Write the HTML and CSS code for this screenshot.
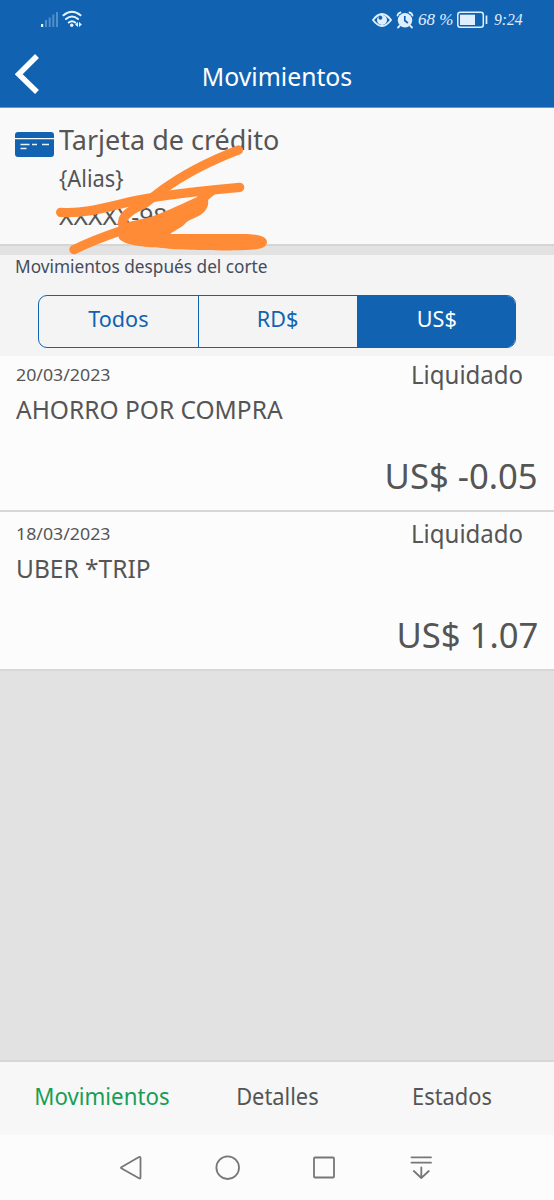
FILE: index.html
```html
<!DOCTYPE html>
<html lang="es">
<head>
<meta charset="utf-8">
<title>Movimientos</title>
<link rel="stylesheet" href="styles.css">
</head>
<body>
<div class="screen">
  <header class="top">
    <div class="status">
      <svg class="signal" width="50" height="24" viewBox="0 0 50 24">
        <g fill="#4f8fca"><rect x="5" y="12" width="2" height="7"/><rect x="8.700" y="9.500" width="2" height="9.500"/><rect x="12.300" y="6.500" width="2" height="12.500"/><rect x="16" y="4" width="2" height="15"/></g>
        <rect x="1" y="16" width="2.200" height="3" fill="#e6fbff"/>
        <g fill="none" stroke="#e3f6ff" stroke-width="2" stroke-linecap="round"><path d="M23.500 7.300q8.500-7 17 0M26 11q6-5 12 0M28.800 14.500q3.200-2.600 6.400 0"/></g>
        <circle cx="31.700" cy="17.300" r="1.700" fill="#e3f6ff"/>
        <path d="M38 14v5l-2.900-2.500zM39 14v5l2.900-2.500z" fill="#e3f6ff"/>
      </svg>
      <div class="status-right">
        <svg class="eye" width="20" height="16" viewBox="0 0 20 16"><path d="M1 8Q10-4 19 8Q10 20 1 8z" fill="none" stroke="#e0efff" stroke-width="1.900"/><circle cx="10" cy="8" r="5" fill="#e0efff"/><circle cx="8.400" cy="5.800" r="2" fill="#1163b1"/></svg>
        <svg class="alarm" width="18" height="18" viewBox="0 0 18 18"><circle cx="9" cy="9.300" r="7.200" fill="#e0efff"/><path d="M1.500 4.500Q2 2 4.500 1.500M13.500 1.500Q16 2 16.500 4.500M3.500 15l-1.500 1.500M14.500 15l1.500 1.500" fill="none" stroke="#e0efff" stroke-width="1.800" stroke-linecap="round"/><path d="M8.800 5v4.500l3 2.500" fill="none" stroke="#1163b1" stroke-width="1.700"/></svg>
        <span class="percent">68 %</span>
        <svg class="battery" width="31" height="18" viewBox="0 0 31 18"><rect x=".8" y="1.300" width="25.500" height="15" rx="2.500" fill="none" stroke="#e0efff" stroke-width="1.500"/><rect x="3" y="3.700" width="15" height="10.300" fill="#e0efff"/><path d="M29.500 4.500v8.500" stroke="#e0efff" stroke-width="1.700"/></svg>
        <span class="clock">9:24</span>
      </div>
    </div>
    <div class="titlebar">
      <svg class="back" width="24" height="40" viewBox="0 0 24 40"><path d="M22 2L3.700 20.300 22 38" fill="none" stroke="#fff" stroke-width="5.500"/></svg>
      <h1 class="title"><span>Movimientos</span></h1>
    </div>
  </header>

  <section class="account">
    <svg class="card-icon" width="39" height="25" viewBox="0 0 39 25"><path d="M0 6V3Q0 0 3 0H36Q39 0 39 3V6zM0 7.300H39V22Q39 25 36 25H3Q0 25 0 22z" fill="#1163b1"/><path d="M5.500 12.500h9M5.500 16.500h6M17 12.500h5M27 12.500h7" stroke="#e8f2fb" stroke-width="1.300"/></svg>
    <div class="account-text">
      <div class="product"><span>Tarjeta de crédito</span></div>
      <div class="alias"><span>{Alias}</span></div>
      <div class="number"><span>XXXXX-98</span></div>
    </div>
    <svg class="scribble" width="230" height="120" viewBox="0 0 690 360">
      <g fill="none" stroke="#ff8b37" stroke-width="28" stroke-linecap="round" stroke-linejoin="round">
        <path d="M565 30C490 59 400 104 340 148L282 192C240 210 216 228 218 252L228 290"/>
        <path d="M32 217C100 222 160 204 215 191C300 168 460 152 569 142"/>
        <path d="M72 329C115 307 165 288 225 268"/>
      </g>
      <path fill="#ff8b37" d="M208 262C235 238 275 242 310 228C360 210 400 190 440 172L455 150 510 150 474 180Q478 200 462 216C450 230 425 235 410 246C398 262 378 268 361 282H580C620 282 651 289 651 306C651 325 625 328 600 329C550 333 380 332 320 322C275 321 215 313 206 293Z"/>
    </svg>
  </section>

  <section class="filters">
    <div class="caption"><span>Movimientos después del corte</span></div>
    <div class="segments">
      <div class="segment"><span class="todos">Todos</span></div>
      <div class="segment"><span class="rd">RD$</span></div>
      <div class="segment active"><span class="us">US$</span></div>
    </div>
  </section>

  <main class="list">
    <article class="row">
      <div class="info"><div class="date"><span>20/03/2023</span></div><div class="merchant"><span>AHORRO POR COMPRA</span></div></div>
      <div class="state"><span>Liquidado</span></div>
      <div class="amount"><span>US$ -0.05</span></div>
    </article>
    <article class="row">
      <div class="info"><div class="date"><span>18/03/2023</span></div><div class="merchant"><span>UBER *TRIP</span></div></div>
      <div class="state"><span>Liquidado</span></div>
      <div class="amount"><span>US$ 1.07</span></div>
    </article>
  </main>

  <nav class="tabs">
    <div class="tab current"><span>Movimientos</span></div>
    <div class="tab"><span>Detalles</span></div>
    <div class="tab"><span>Estados</span></div>
  </nav>

  <footer class="system">
    <svg width="26" height="28" viewBox="0 0 26 28"><path d="M3.300 13.300L21 3Q22.500 2.300 22.500 4V23.500Q22.500 25 21 24.300L3.300 14.300Q2.700 13.800 3.300 13.300z"/></svg>
    <svg width="26" height="28" viewBox="0 0 26 28"><circle cx="12.700" cy="13.700" r="11.300"/></svg>
    <svg width="26" height="28" viewBox="0 0 26 28"><rect x="3" y="3.500" width="20" height="20" rx="1"/></svg>
    <svg width="26" height="28" viewBox="0 0 26 28"><path d="M3.500 3.300h19.500M3.500 8.700h19.500M13.300 13.500v10.500M5.800 17l7.500 7 7.500-7"/></svg>
  </footer>
</div>
</body>
</html>
```
FILE: styles.css
```css
* { box-sizing: border-box; }
body { margin: 0; font-family: "Noto Sans", "Open Sans", sans-serif; color: #555; }
svg { display: block; flex: none; }
span { display: inline-block; white-space: nowrap; transform-origin: 0 50%; }
.screen { width: 554px; height: 1200px; display: flex; flex-direction: column; background: #e2e2e2; overflow: hidden; }

.top { height: 108px; background: #1163b1; border-bottom: 1px solid #6797c4; flex: none; }
.status { height: 40px; display: flex; justify-content: space-between; padding: 8px 31px 0 40px; }
.status-right { display: flex; align-items: center; height: 23px; color: #e0efff; font: italic 17px/23px "Liberation Serif", serif; }
.alarm { margin: 0 4px; }
.percent { width: 35px; margin-right: 4px; }
.battery { margin-right: 6px; }
.clock { width: 29px; transform: scaleX(.92); }
.titlebar { height: 67px; display: grid; grid-template-columns: 40px 1fr 40px; padding-left: 15px; }
.back { margin-top: 14px; }
.title { margin: 0; padding-top: 16px; padding-right: 15px; color: #fff; font-size: 25px; line-height: 41px; font-weight: 400; text-align: center; }
.title span { transform: scaleX(.99); transform-origin: 50% 50%; }

.account { position: relative; height: 138px; display: flex; flex: none; background: #f9f9f9; border-bottom: 2px solid #d5d5d5; padding-left: 15px; }
.card-icon { margin-top: 24px; }
.account-text { padding-left: 5px; padding-top: 11px; }
.product { font-size: 28px; line-height: 40px; }
.product span { transform: scaleX(.963); }
.alias { font-size: 23.500px; line-height: 39px; }
.alias span { transform: scaleX(.93); }
.number { font-size: 23.500px; line-height: 37px; }
.number span { transform: scaleX(1.05); }
.scribble { position: absolute; left: 50px; top: 32px; z-index: 2; }

.filters { flex: none; margin-top: 9px; height: 101px; background: #f4f4f4; padding: 0 38px 0 15px; }
.caption { height: 40px; color: #454c5c; font-size: 17.500px; line-height: 22px; }
.caption span { transform: scaleX(.985); }
.segments { margin-left: 23px; height: 53px; display: grid; grid-template-columns: 160px 159px 1fr; border: 1.500px solid #1163b1; border-radius: 9px; overflow: hidden; }
.segment { text-align: center; color: #1163b1; font-size: 22.500px; line-height: 46px; border-right: 1px solid #1163b1; }
.segment span { transform-origin: 50% 50%; }
.segment.active { background: #1163b1; color: #fff; border: 0; }
.segment .todos { transform: scaleX(.96); }
.segment .rd, .segment .us { transform: scaleX(.96); }

.list { flex: 1; }
.row { height: 156px; display: grid; grid-template-columns: 1fr 127px; grid-template-rows: 94px 1fr; padding: 0 16px; background: #fcfcfc; border-bottom: 2px solid #d7d7d7; }
.row + .row { height: 159px; padding-top: 3px; }
.date { font-size: 17px; line-height: 37px; height: 36px; }
.date span { transform: scaleX(1.045); }
.merchant { font-size: 25px; line-height: 35px; }
.merchant span { transform: scaleX(.98); }
.state { font-size: 24.500px; line-height: 37px; }
.state span { transform: scaleX(.98); }
.amount { grid-column: 1 / 3; text-align: right; font-size: 35px; line-height: 52px; }
.amount span { transform: scaleX(.99); transform-origin: 100% 50%; }

.tabs { height: 75px; flex: none; display: grid; grid-template-columns: 203px 148px 203px; background: #f7f7f7; border-top: 2px solid #d7d7d7; text-align: center; font-size: 23px; line-height: 69px; }
.tab span { transform: scaleX(.95); transform-origin: 50% 50%; }
.tab.current { color: #179e56; }
.tab.current span { transform: scaleX(.968); }

.system { height: 65px; flex: none; display: flex; justify-content: center; gap: 70.500px; padding: 19px 2px 0 0; background: #fcfcfc; }
.system svg { fill: none; stroke: #777; stroke-width: 1.800; stroke-linejoin: round; stroke-linecap: round; }
```
